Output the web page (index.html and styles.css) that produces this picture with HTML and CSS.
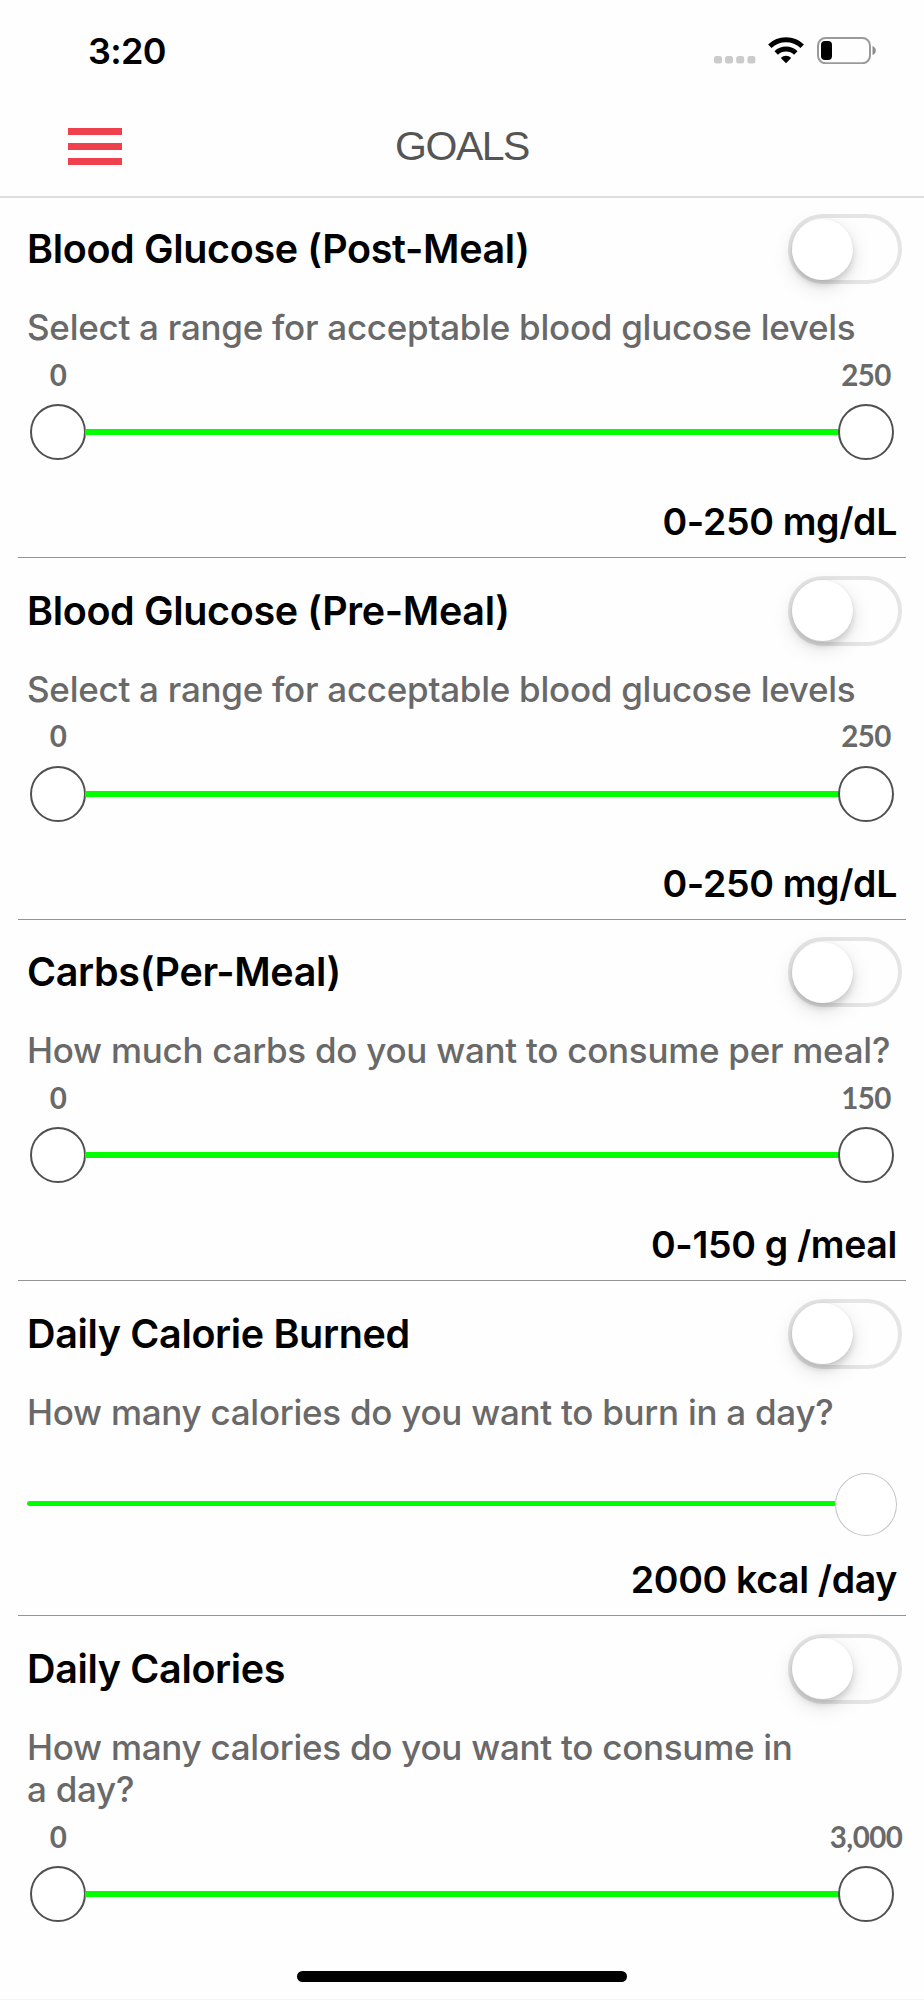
FILE: index.html
```html
<!DOCTYPE html>
<html lang="en">
<head>
    <meta charset="UTF-8">
    <meta name="viewport" content="width=device-width, initial-scale=1.0">
    <title>Goals</title>
    <link rel="stylesheet" href="styles.css">
</head>
<body>
    <div class="screen">
        <header>
            <div class="status-bar">
                <span class="time">3:20</span>
                <div class="status-icons">
                    <svg class="signal" width="42" height="27" viewBox="0 0 42 27" fill="#cbcbcb">
                        <rect x="0" y="19" width="8" height="7.5" rx="2.5"/>
                        <rect x="11" y="19" width="8" height="7.5" rx="2.5"/>
                        <rect x="22.2" y="19" width="8" height="7.5" rx="2.5"/>
                        <rect x="33.4" y="19" width="8" height="7.5" rx="2.5"/>
                    </svg>
                    <svg class="wifi" width="36" height="27" viewBox="0 0 36 27">
                        <path d="M1.8 9.2A23.5 23.5 0 0 1 34.2 9.2" fill="none" stroke="#000" stroke-width="5"/>
                        <path d="M8.2 16A14.2 14.2 0 0 1 27.8 16" fill="none" stroke="#000" stroke-width="5"/>
                        <path d="M12.8 20.9A7.6 7.6 0 0 1 23.2 20.9L18 26.2Z"/>
                    </svg>
                    <svg class="battery" width="60" height="27" viewBox="0 0 60 27">
                        <rect x="1" y="1" width="52" height="25.2" rx="7.5" fill="none" stroke="#9a9a9a" stroke-width="2"/>
                        <rect x="4" y="4" width="11" height="19" rx="4"/>
                        <path d="M55.5 9Q58.8 10.5 58.8 13.5T55.5 18Z" fill="#8c8c8c"/>
                    </svg>
                </div>
            </div>
            <div class="nav-bar">
                <button class="menu" aria-label="Menu"><span></span><span></span><span></span></button>
                <h1>GOALS</h1>
            </div>
        </header>

        <main>
            <section class="goal">
                <div class="goal-head">
                    <h2>Blood Glucose (Post-Meal)</h2>
                    <div class="toggle"><span></span></div>
                </div>
                <p class="desc">Select a range for acceptable blood glucose levels</p>
                <div class="range">
                    <div class="labels"><span>0</span><span>250</span></div>
                    <div class="track"><i></i><b></b><i></i></div>
                </div>
                <div class="value">0-250 mg/dL</div>
            </section>

            <section class="goal">
                <div class="goal-head">
                    <h2>Blood Glucose (Pre-Meal)</h2>
                    <div class="toggle"><span></span></div>
                </div>
                <p class="desc">Select a range for acceptable blood glucose levels</p>
                <div class="range">
                    <div class="labels"><span>0</span><span>250</span></div>
                    <div class="track"><i></i><b></b><i></i></div>
                </div>
                <div class="value">0-250 mg/dL</div>
            </section>

            <section class="goal">
                <div class="goal-head">
                    <h2>Carbs(Per-Meal)</h2>
                    <div class="toggle"><span></span></div>
                </div>
                <p class="desc">How much carbs do you want to consume per meal?</p>
                <div class="range">
                    <div class="labels"><span>0</span><span>150</span></div>
                    <div class="track"><i></i><b></b><i></i></div>
                </div>
                <div class="value">0-150 g /meal</div>
            </section>

            <section class="goal goal-single">
                <div class="goal-head">
                    <h2>Daily Calorie Burned</h2>
                    <div class="toggle"><span></span></div>
                </div>
                <p class="desc">How many calories do you want to burn in a day?</p>
                <div class="slider"><b></b><i></i></div>
                <div class="value">2000 kcal /day</div>
            </section>

            <section class="goal goal-last">
                <div class="goal-head">
                    <h2>Daily Calories</h2>
                    <div class="toggle"><span></span></div>
                </div>
                <p class="desc">How many calories do you want to consume in<br>a day?</p>
                <div class="range">
                    <div class="labels"><span>0</span><span>3,000</span></div>
                    <div class="track"><i></i><b></b><i></i></div>
                </div>
            </section>
        </main>

        <div class="home-indicator"></div>
    </div>
</body>
</html>
```

FILE: styles.css
```css
* {
    margin: 0;
    padding: 0;
    box-sizing: border-box;
}

body {
    background-color: #fefefe;
    font-family: Inter, "Liberation Sans", sans-serif;
    color: #000;
}

.screen {
    width: 924px;
    height: 2000px;
    overflow: hidden;
    display: flex;
    flex-direction: column;
    border-bottom: 1px solid #f4f4f4;
}

/* Header */
header {
    height: 198px;
    border-bottom: 2px solid #dedede;
    flex-shrink: 0;
}

.status-bar {
    display: flex;
    justify-content: space-between;
    height: 101px;
    padding: 37px 47px 0 88px;
}

.time {
    font-size: 36px;
    font-weight: 600;
    line-height: 28px;
    letter-spacing: -0.7px;
}

.status-icons {
    display: flex;
}

.wifi {
    margin-left: 12px;
}

.battery {
    margin-left: 13px;
}

.nav-bar {
    display: grid;
    grid-template-columns: 1fr auto 1fr;
    align-items: center;
    height: 91px;
    padding: 0 68px;
}

.menu {
    display: flex;
    flex-direction: column;
    gap: 8px;
    width: 54px;
    background: none;
    border: none;
}

.menu span {
    width: 54px;
    height: 7px;
    background-color: #ef404e;
}

.nav-bar h1 {
    font-family: "Liberation Sans", Arial, sans-serif;
    font-size: 41px;
    font-weight: 400;
    letter-spacing: -1.5px;
    color: #555;
}

/* Goals */
main {
    flex: 1;
    margin-top: -1.5px;
}

.goal {
    display: flex;
    flex-direction: column;
    height: 361.5px;
    margin: 0 18px;
    padding: 17.5px 9px 0;
    border-bottom: 1px solid #949494;
}

.goal-head {
    display: flex;
    justify-content: space-between;
    align-items: center;
    height: 70px;
    margin-right: -5px;
}

.goal-head h2 {
    font-size: 39.5px;
    font-weight: 600;
    letter-spacing: -0.35px;
    white-space: nowrap;
}

.toggle {
    width: 114px;
    height: 70px;
    padding: 0.5px 0 0 0;
    border: 4px solid #e5e5e5;
    border-radius: 35px;
}

.toggle span {
    display: block;
    width: 61px;
    height: 61px;
    border-radius: 50%;
    background-color: #fff;
    box-shadow: 0 7px 20px rgba(0,0,0,0.13), 0 5px 6px rgba(0,0,0,0.12), 0 0 2px rgba(0,0,0,0.08);
}

.desc {
    margin-top: 22px;
    font-size: 35px;
    font-weight: 500;
    line-height: 42.5px;
    letter-spacing: -0.27px;
    color: #696969;
    white-space: nowrap;
}

.range {
    margin: 8px 3px 0;
}

.labels {
    display: flex;
    justify-content: space-between;
    font-family: Lato, sans-serif;
    font-size: 29.5px;
    font-weight: 700;
    line-height: 36px;
    letter-spacing: -0.6px;
    color: #696969;
}

/* each label is centred over its thumb */
.labels span {
    display: flex;
    justify-content: center;
    width: 56px;
}

.track {
    display: flex;
    align-items: center;
    margin-top: 11.5px;
}

.track i {
    width: 56px;
    height: 56px;
    border: 2px solid #505050;
    border-radius: 50%;
    background-color: #fff;
}

.track b {
    flex: 1;
    height: 6px;
    margin: 0 -1px;
    background-color: #00ff00;
}

.value {
    margin-top: auto;
    margin-bottom: 13px;
    font-size: 37.5px;
    font-weight: 600;
    line-height: 44px;
    letter-spacing: -0.35px;
    text-align: right;
}

.goal-single {
    height: 335px;
}

.slider {
    display: flex;
    align-items: center;
    margin: 39.5px 0 0;
}

.slider b {
    flex: 1;
    height: 5px;
    margin-top: -2px;
    border-radius: 3px 0 0 3px;
    background-color: #00ff00;
}

.slider i {
    width: 62px;
    height: 63px;
    border: 1px solid #c4c4c4;
    border-radius: 50%;
    background-color: #fff;
}

.goal-last {
    height: auto;
    border-bottom: none;
}

.home-indicator {
    width: 330px;
    height: 11px;
    margin: 0 auto 17px;
    border-radius: 6px;
    background-color: #000;
}
```
